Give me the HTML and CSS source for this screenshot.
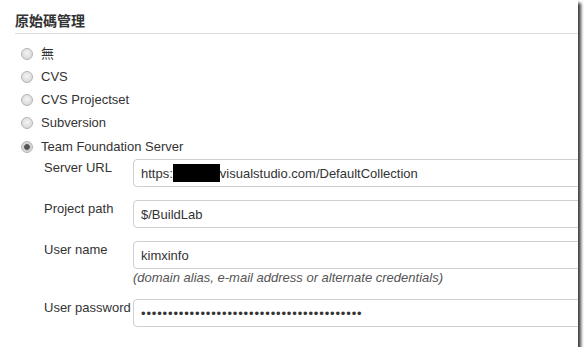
FILE: index.html
```html
<!DOCTYPE html>
<html lang="zh-Hant">
<head>
    <meta charset="UTF-8">
    <title>原始碼管理</title>
    <link rel="stylesheet" href="styles.css">
</head>
<body>
    <div class="frame">
        <div class="section">
            <h2 class="section-title">原始碼管理</h2>

            <div class="scm-list">
                <label class="scm-option"><input type="radio" name="scm"><span>無</span></label>
                <label class="scm-option"><input type="radio" name="scm"><span>CVS</span></label>
                <label class="scm-option"><input type="radio" name="scm"><span>CVS Projectset</span></label>
                <label class="scm-option"><input type="radio" name="scm"><span>Subversion</span></label>
                <label class="scm-option"><input type="radio" name="scm" checked><span>Team Foundation Server</span></label>
            </div>

            <div class="tfs-form">
                <div class="form-label">Server URL</div>
                <div class="form-value">
                    <div class="field">https:<span class="redacted"></span>visualstudio.com/DefaultCollection</div>
                </div>

                <div class="form-label">Project path</div>
                <div class="form-value">
                    <input class="field" type="text" value="$/BuildLab">
                </div>

                <div class="form-label">User name</div>
                <div class="form-value">
                    <input class="field" type="text" value="kimxinfo">
                    <div class="help-text">(domain alias, e-mail address or alternate credentials)</div>
                </div>

                <div class="form-label">User password</div>
                <div class="form-value">
                    <input class="field password" type="password" value="12345678901234567890123456789012345678901">
                </div>
            </div>
        </div>
    </div>
</body>
</html>
```

FILE: styles.css
```css
body {
    margin: 0;
    background: #fff;
    font-family: 'Liberation Sans', Arial, 'Noto Sans CJK TC', sans-serif;
    font-size: 13px;
    color: #333;
}

.frame {
    width: 578px;
    height: 347px;
    overflow: hidden;
    background: #fff;
    box-shadow: 3px 3px 3px rgba(0, 0, 0, 0.75);
}

.section {
    padding-left: 15px;
}

.section-title {
    margin: 0;
    padding: 13px 0 4px;
    font-family: 'Liberation Sans', 'Noto Sans CJK TC', sans-serif;
    font-size: 14px;
    line-height: 16px;
    font-weight: bold;
    color: #333;
    border-bottom: 1px solid #ddd;
}

.scm-list {
    padding: 8px 0 0 6px;
}

.scm-option {
    display: flex;
    align-items: center;
    height: 23.25px;
    line-height: 16px;
}

.scm-option input {
    appearance: none;
    -webkit-appearance: none;
    width: 12px;
    height: 12px;
    margin: 0 8px 0 0;
    border: 1px solid #b4b4b4;
    border-radius: 50%;
    background: radial-gradient(circle at 50% 40%, #f4f4f4 0%, #d8d8d8 80%);
    box-sizing: border-box;
}

.scm-option input:checked {
    background: radial-gradient(circle, #555 0, #555 2.5px, #cfcfcf 3.2px, #e6e6e6 100%);
}

.tfs-form {
    display: grid;
    grid-template-columns: 89px 1fr;
    row-gap: 13px;
    padding: 1px 0 0 29px;
}

.form-label {
    line-height: 16px;
    padding-top: 1px;
}

.form-value {
    min-width: 0;
}

.field {
    display: flex;
    align-items: center;
    width: 480px;
    height: 28px;
    box-sizing: border-box;
    margin: 0;
    padding: 0 7px;
    border: 1px solid #cfcfcf;
    border-radius: 4px;
    background: #fff;
    font-family: inherit;
    font-size: 13px;
    color: #333;
    outline: none;
}

.password {
    letter-spacing: 0.85px;
}

.redacted {
    display: inline-block;
    width: 47px;
    height: 18px;
    background: #000;
}

.help-text {
    margin-top: 1px;
    line-height: 16px;
    font-style: italic;
    color: #555;
}
```
